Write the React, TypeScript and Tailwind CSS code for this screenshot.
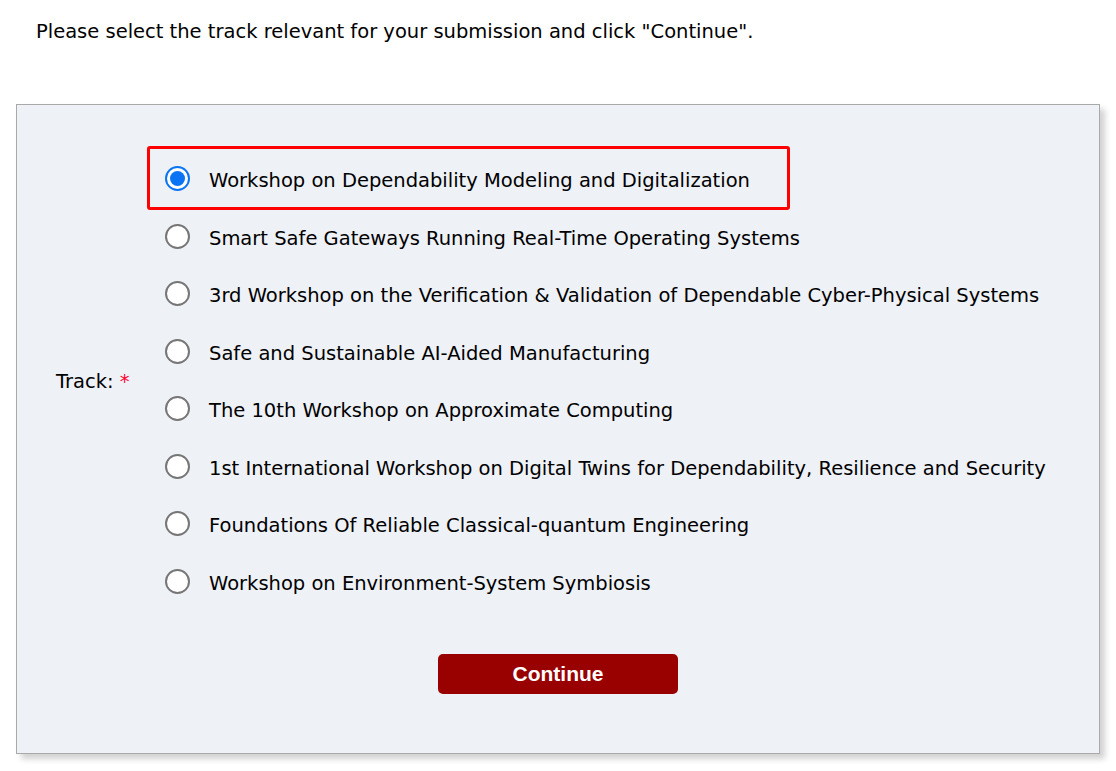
import React, { useState } from "react";

const TRACKS = [
  "Workshop on Dependability Modeling and Digitalization",
  "Smart Safe Gateways Running Real-Time Operating Systems",
  "3rd Workshop on the Verification & Validation of Dependable Cyber-Physical Systems",
  "Safe and Sustainable AI-Aided Manufacturing",
  "The 10th Workshop on Approximate Computing",
  "1st International Workshop on Digital Twins for Dependability, Resilience and Security",
  "Foundations Of Reliable Classical-quantum Engineering",
  "Workshop on Environment-System Symbiosis",
];

function Radio({ checked }: { checked: boolean }) {
  return checked ? (
    <span className="flex h-[25px] w-[25px] shrink-0 items-center justify-center rounded-full border-2 border-[#0b74f4] bg-white">
      <span className="h-[15px] w-[15px] rounded-full bg-[#0b74f4]" />
    </span>
  ) : (
    <span className="h-[25px] w-[25px] shrink-0 rounded-full border-2 border-[#767676] bg-white" />
  );
}

export default function App() {
  const [selected, setSelected] = useState(0);

  return (
    <div className="min-h-[771px] bg-white text-black" style={{ fontFamily: '"DejaVu Sans", Verdana, sans-serif' }}>
      <p className="px-[36px] pt-[21px] text-[19.5px] leading-[22px]">
        Please select the track relevant for your submission and click "Continue".
      </p>

      <div className="mx-[16px] mt-[61px] w-[1084px] border border-[#a9a9a9] bg-[#eef1f6] shadow-[5px_5px_6px_rgba(0,0,0,0.18)]">
        <div className="flex items-center pt-[45px]">
          <div className="w-[148px] shrink-0 pl-[39px] pt-[3px] text-[19.5px] whitespace-nowrap">
            Track: <span className="text-[#ff0033]">*</span>
          </div>
          <div className="flex flex-col">
            {TRACKS.map((t, i) => (
              <label
                key={t}
                onClick={() => setSelected(i)}
                className="relative flex h-[57.5px] cursor-pointer items-center gap-[19px] text-[19.5px] whitespace-nowrap"
              >
                <Radio checked={selected === i} />
                <span className="pt-[4px]">{t}</span>
                {i === 0 && (
                  <span className="pointer-events-none absolute left-[-18px] top-[-4px] h-[64px] w-[643px] rounded-[3px] border-[3px] border-[#ff0000]" />
                )}
              </label>
            ))}
          </div>
        </div>

        <div className="flex justify-center pb-[59px] pt-[44px]">
          <button
            className="h-[40px] w-[240px] rounded-[5px] bg-[#990000] text-[21px] font-bold text-white"
            style={{ fontFamily: '"Liberation Sans", Arial, sans-serif' }}
          >
            Continue
          </button>
        </div>
      </div>
    </div>
  );
}
